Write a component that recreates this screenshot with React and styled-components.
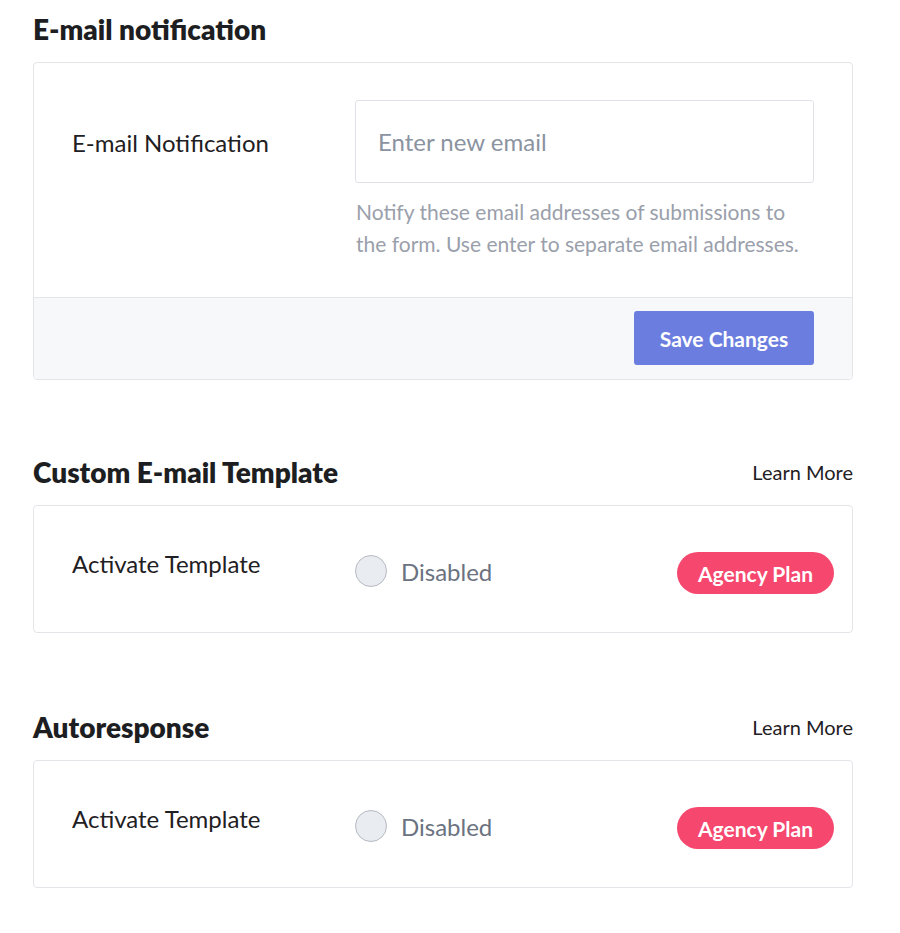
import React from 'react';
import styled, { createGlobalStyle } from 'styled-components';

const GlobalStyle = createGlobalStyle`
  body {
    margin: 0;
    background: #ffffff;
    font-family: Lato, "Open Sans", sans-serif;
    color: #1f2023;
  }
`;

const Page = styled.div`
  width: 820px;
  padding: 12px 0 40px 33px;
`;

const Section = styled.section`
  margin-bottom: ${p => p.gap || 0}px;
`;

const SectionHeader = styled.div`
  display: flex;
  align-items: center;
  justify-content: space-between;
  height: 34px;
  margin-bottom: 16px;
`;

const SectionTitle = styled.h2`
  margin: 0;
  font-size: 28px;
  font-weight: 800;
  color: #1d1e21;
`;

const LearnMore = styled.a`
  font-size: 20px;
  color: #1f2023;
  text-decoration: none;
  cursor: pointer;
`;

const Card = styled.div`
  border: 1px solid #e3e5e9;
  border-radius: 4px;
  background: #ffffff;
  overflow: hidden;
`;

const CardBody = styled.div`
  display: grid;
  grid-template-columns: 283px 1fr;
  padding: 37px 38px 37px 38px;
`;

const FieldLabel = styled.div`
  font-size: 24px;
  color: #1f2023;
  padding-top: ${p => p.top || 0}px;
  padding-bottom: ${p => p.bottom || 0}px;
`;

const Field = styled.div`
  display: flex;
  flex-direction: column;
`;

const EmailInput = styled.input`
  box-sizing: border-box;
  height: 83px;
  width: 100%;
  border: 1px solid #dfe2e6;
  border-radius: 3px;
  padding: 0 22px;
  font-family: inherit;
  font-size: 24px;
  color: #1f2023;
  outline: none;

  &::placeholder {
    color: #8b93a1;
  }
`;

const HelpText = styled.p`
  margin: 13px 0 0 1px;
  font-size: 21px;
  line-height: 32px;
  color: #9aa0ab;
  max-width: 445px;
`;

const CardFooter = styled.div`
  display: flex;
  justify-content: flex-end;
  padding: 13px 38px 14px;
  background: #f7f8fa;
  border-top: 1px solid #e3e5e9;
`;

const SaveButton = styled.button`
  width: 180px;
  height: 54px;
  border: none;
  border-radius: 3px;
  background: #6b7ee0;
  color: #ffffff;
  font-family: inherit;
  font-size: 21px;
  font-weight: 700;
  cursor: pointer;
`;

const ToggleRow = styled.div`
  display: grid;
  grid-template-columns: 283px 1fr auto;
  align-items: center;
  height: 126px;
  padding: 0 18px 0 38px;
`;

const RadioWrap = styled.label`
  display: flex;
  align-items: center;
  gap: 14px;
  font-size: 24px;
  color: #6b7280;
  padding-top: 4px;
`;

const Radio = styled.span`
  width: 30px;
  height: 30px;
  border-radius: 50%;
  border: 1px solid #b5bac2;
  background: #e9ecf0;
`;

const PlanBadge = styled.span`
  display: inline-flex;
  align-items: center;
  justify-content: center;
  width: 157px;
  height: 42px;
  border-radius: 21px;
  background: #f6476f;
  color: #ffffff;
  font-size: 21px;
  font-weight: 700;
  margin-top: 8px;
`;

const TemplateCard = ({ title, gap }) => (
  <Section gap={gap}>
    <SectionHeader>
      <SectionTitle>{title}</SectionTitle>
      <LearnMore>Learn More</LearnMore>
    </SectionHeader>
    <Card>
      <ToggleRow>
        <FieldLabel bottom={12}>Activate Template</FieldLabel>
        <RadioWrap>
          <Radio />
          Disabled
        </RadioWrap>
        <PlanBadge>Agency Plan</PlanBadge>
      </ToggleRow>
    </Card>
  </Section>
);

export default function App() {
  return (
    <>
      <GlobalStyle />
      <Page>
        <Section gap={75}>
          <SectionHeader>
            <SectionTitle>E-mail notification</SectionTitle>
          </SectionHeader>
          <Card>
            <CardBody>
              <FieldLabel top={28}>E-mail Notification</FieldLabel>
              <Field>
                <EmailInput placeholder="Enter new email" />
                <HelpText>
                  Notify these email addresses of submissions to the form. Use enter to separate email addresses.
                </HelpText>
              </Field>
            </CardBody>
            <CardFooter>
              <SaveButton>Save Changes</SaveButton>
            </CardFooter>
          </Card>
        </Section>
        <TemplateCard title="Custom E-mail Template" gap={77} />
        <TemplateCard title="Autoresponse" gap={0} />
      </Page>
    </>
  );
}
